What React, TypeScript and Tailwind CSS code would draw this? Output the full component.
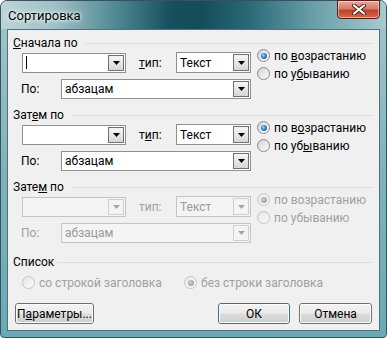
import React from "react";

const F = "font-['Roboto','Liberation_Sans',sans-serif] text-[12px] leading-[14px]";

function Arrow({ disabled }: { disabled?: boolean }) {
  return (
    <svg width="7" height="4" viewBox="0 0 7 4">
      <path d="M0 0H7L3.5 4Z" fill={disabled ? "#a6a6a6" : "#000"} />
    </svg>
  );
}

function Combo({
  className,
  text,
  disabled,
  cursor,
}: {
  className: string;
  text?: React.ReactNode;
  disabled?: boolean;
  cursor?: boolean;
}) {
  return (
    <div
      className={
        "flex border " +
        (disabled ? "border-[#c4c4c4] bg-[#f4f4f4] text-[#9a9a9a] " : "border-[#8e8f8f] bg-white text-black ") +
        className
      }
    >
      <div className="flex flex-1 items-center pl-[3px]">
        {cursor && <span className="ml-[0px] h-[13px] w-px bg-black" />}
        {text}
      </div>
      <div
        className={
          "m-px flex w-[16px] items-center justify-center border " +
          (disabled
            ? "border-[#cfcfcf] bg-[#f4f4f4]"
            : "border-[#707070] bg-[linear-gradient(#f6f6f6,#e6e6e6_50%,#d6d6d6)]")
        }
      >
        <Arrow disabled={disabled} />
      </div>
    </div>
  );
}

function Radio({
  checked,
  disabled,
  children,
  className = "",
}: {
  checked?: boolean;
  disabled?: boolean;
  children: React.ReactNode;
  className?: string;
}) {
  return (
    <div className={"flex h-[13px] items-center " + className}>
      <span
        className={
          "flex h-[13px] w-[13px] shrink-0 items-center justify-center rounded-full border " +
          (disabled
            ? "border-[#c4c4c4] bg-[linear-gradient(135deg,#e6e6e6,#fbfbfb)]"
            : "border-[#8a8a8a] bg-[linear-gradient(135deg,#d2d2d2,#fdfdfd)]")
        }
      >
        {checked && (
          <span
            className={
              "h-[6px] w-[6px] rounded-full " +
              (disabled
                ? "bg-[radial-gradient(circle_at_40%_40%,#d0d0d0,#8a8a8a)]"
                : "bg-[radial-gradient(circle_at_40%_40%,#8fdcff,#1a6fb8_60%,#0b3f7a)]")
            }
          />
        )}
      </span>
      <span className={"ml-[4px] whitespace-nowrap " + (disabled ? "text-[#a0a0a0]" : "text-black")}>
        {children}
      </span>
    </div>
  );
}

function Header({ children, lineW }: { children: React.ReactNode; lineW: string }) {
  return (
    <div className="flex h-[14px] items-center justify-between">
      <span className="whitespace-nowrap text-black">{children}</span>
      <span className={"h-px bg-[#d5dfe5] " + lineW} />
    </div>
  );
}

function SortGroup({
  label,
  lineW,
  typeLabel,
  asc,
  desc,
  disabled,
  cursor,
  className = "",
}: {
  label: React.ReactNode;
  lineW: string;
  typeLabel: React.ReactNode;
  asc: React.ReactNode;
  desc: React.ReactNode;
  disabled?: boolean;
  cursor?: boolean;
  className?: string;
}) {
  const labelColor = disabled ? "text-[#a0a0a0]" : "text-black";
  return (
    <div className={"flex flex-col " + className}>
      <Header lineW={lineW}>{label}</Header>
      <div className="flex pl-[9px]">
        <div className="flex flex-col pt-[2px]">
          <div className="flex h-[21px] items-center">
            <Combo className="h-[20px] w-[104px]" disabled={disabled} cursor={cursor} />
            <span className={"ml-[13px] w-[37px] " + labelColor}>{typeLabel}</span>
            <Combo className="h-[21px] w-[75px]" disabled={disabled} text="Текст" />
          </div>
          <div className="mt-[6px] flex h-[20px] items-center">
            <span className={"-ml-px w-[40px] " + labelColor}>По:</span>
            <Combo className="h-[20px] w-[190px]" disabled={disabled} text="абзацам" />
          </div>
        </div>
        <div className="-mt-px ml-[6px] flex flex-col gap-[5px]">
          <Radio checked disabled={disabled}>
            {asc}
          </Radio>
          <Radio disabled={disabled}>{desc}</Radio>
        </div>
      </div>
    </div>
  );
}

function Btn({ children, className = "", def }: { children: React.ReactNode; className?: string; def?: boolean }) {
  return (
    <div
      className={
        "flex h-[21px] items-center justify-center rounded-[3px] border text-black " +
        (def ? "border-[#3d6d8f] " : "border-[#707070] ") +
        className
      }
    >
      <div className="flex h-full w-full items-center justify-center rounded-[2px] border border-[#fbfbfb] bg-[linear-gradient(#f2f2f2,#ebebeb_48%,#dddddd_52%,#cfcfcf)]">
        {children}
      </div>
    </div>
  );
}

export default function App() {
  return (
    <div className={"h-[338px] w-[387px] bg-white " + F}>
      <div className="flex h-[338px] w-[387px] flex-col rounded-t-[7px] rounded-b-[4px] border border-[#39535c] bg-[linear-gradient(#a3c6cb,#7fb3bb_50%,#6aaab4)]">
        <div className="flex h-[28px] items-start rounded-t-[6px] bg-[linear-gradient(to_right,#bcd4d8_0%,#9fc1c6_14%,#4f8793_30%,#174f5e_44%,#154c5a_52%,#2a6876_64%,#6ba1aa_82%,#a9cace_100%)]">
          <span className="ml-[7px] mt-[7px] text-[13px] leading-[16px] text-black [text-shadow:0_0_6px_#ffffff,0_0_3px_#ffffff]">
            Сортировка
          </span>
          <div className="flex-1" />
          <div className="-mt-px mr-[6px] flex h-[19px] w-[43px] items-center justify-center rounded-b-[4px] border border-[#5a1f17] bg-[linear-gradient(#e9a99b,#d77a64_45%,#c0442c_55%,#d56a4c)] shadow-[inset_0_0_0_1px_rgba(255,255,255,0.45)]">
            <svg width="14" height="11" viewBox="0 0 14 11">
              <path d="M2 1.5L12 9.5M12 1.5L2 9.5" stroke="#4a2018" strokeWidth="4" strokeLinecap="round" />
              <path d="M2 1.5L12 9.5M12 1.5L2 9.5" stroke="#ffffff" strokeWidth="2.2" strokeLinecap="round" />
            </svg>
          </div>
        </div>
        <div className="mx-[6px] mb-[6px] flex flex-1 flex-col border border-[#55707a] bg-[#f0f0f0] pl-[5px] pr-[7px] pt-[6px]">
          <SortGroup
            label={<><u>С</u>начала по</>}
            lineW="w-[287px]"
            typeLabel={<><u>т</u>ип:</>}
            asc={<>по <u>в</u>озрастанию</>}
            desc={<>по у<u>б</u>ыванию</>}
            cursor
          />
          <SortGroup
            className="mt-[9px]"
            label={<>Зат<u>е</u>м по</>}
            lineW="w-[300px]"
            typeLabel={<>т<u>и</u>п:</>}
            asc={<>по в<u>о</u>зрастанию</>}
            desc={<>по уб<u>ы</u>ванию</>}
          />
          <SortGroup
            className="mt-[9px]"
            label={<>Зате<u>м</u> по</>}
            lineW="w-[300px]"
            typeLabel="тип:"
            asc="по возрастанию"
            desc="по убыванию"
            disabled
          />
          <div className="mt-[12px]">
            <Header lineW="w-[315px]">Список</Header>
          </div>
          <div className="mt-[7px] flex pl-[9px]">
            <Radio disabled className="w-[162px]">
              со строкой заголовка
            </Radio>
            <Radio disabled checked>
              без строки заголовка
            </Radio>
          </div>
          <div className="mt-[14px] flex items-center">
            <Btn className="ml-[2px] w-[79px]">
              <span>
                П<u>а</u>раметры...
              </span>
            </Btn>
            <div className="flex-1" />
            <Btn className="w-[72px]" def>
              ОК
            </Btn>
            <Btn className="ml-[9px] w-[73px]">Отмена</Btn>
          </div>
        </div>
      </div>
    </div>
  );
}
